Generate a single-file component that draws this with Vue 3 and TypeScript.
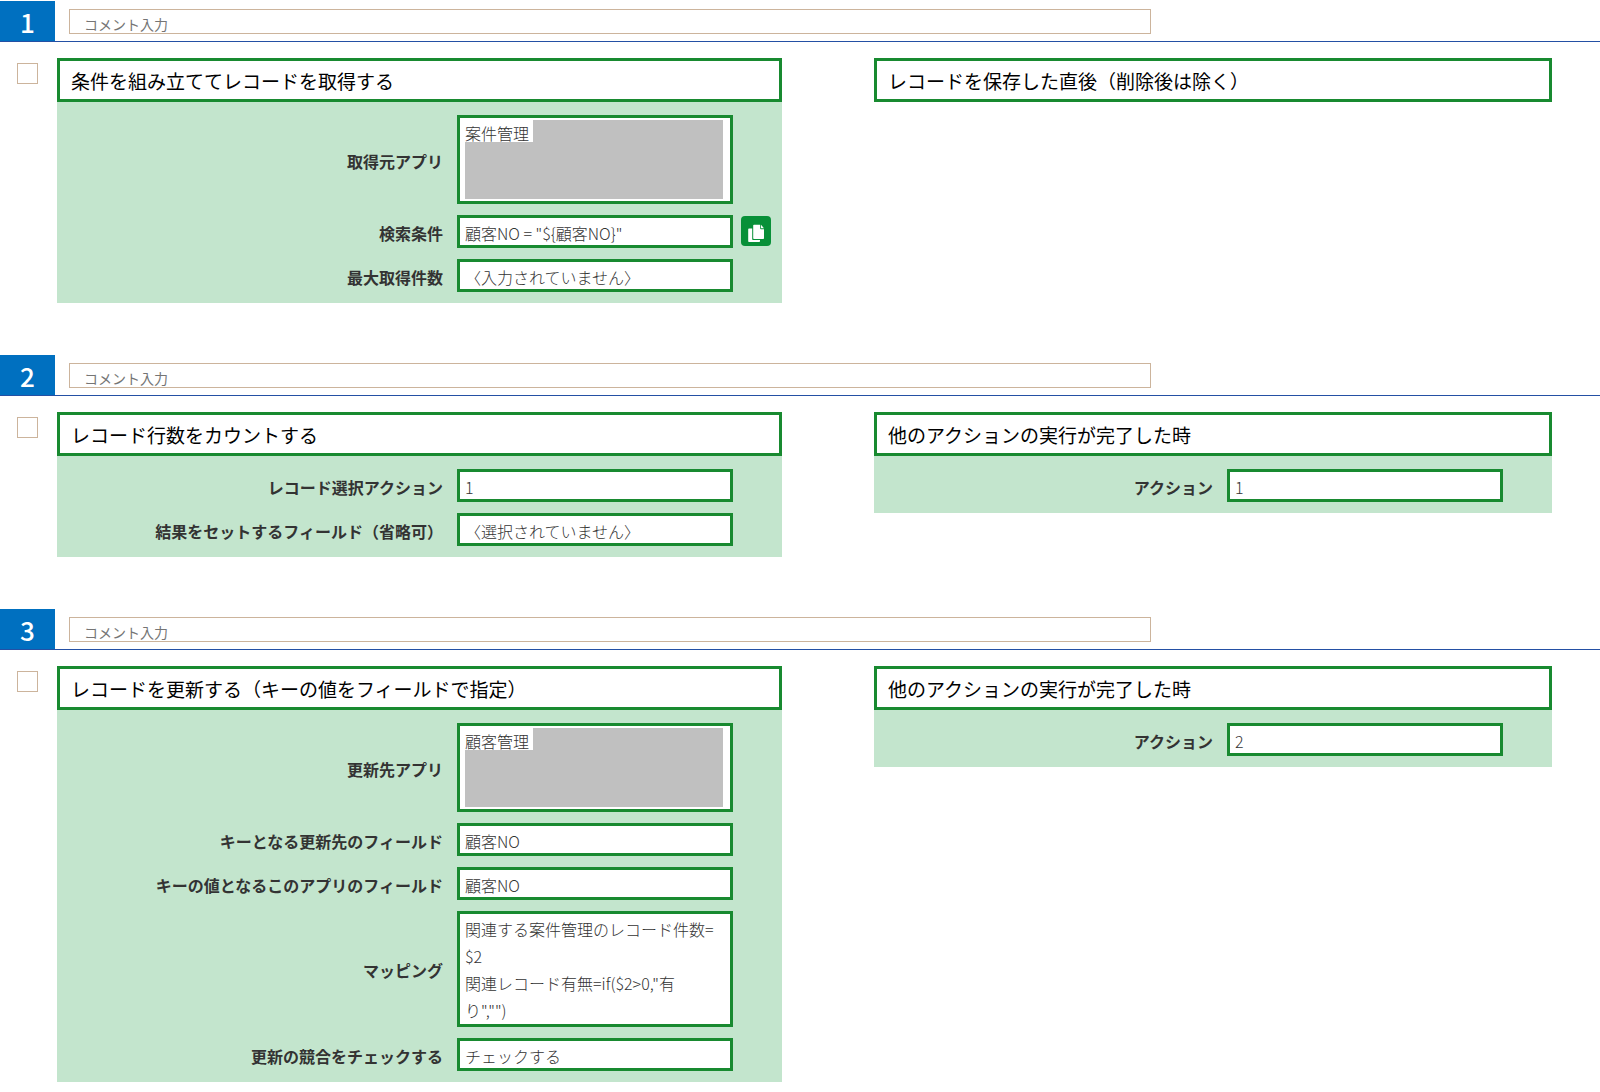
<script setup lang="ts">
interface Field {
  label: string
  value: string
  rows?: number
  masked?: boolean
  copyable?: boolean
}

interface Panel {
  title: string
  fields: Field[]
}

interface Step {
  no: number
  action: Panel
  trigger: Panel
}

const steps: Step[] = [
  {
    no: 1,
    action: {
      title: '条件を組み立ててレコードを取得する',
      fields: [
        { label: '取得元アプリ', value: '案件管理', rows: 3, masked: true },
        { label: '検索条件', value: '顧客NO = "${顧客NO}"', copyable: true },
        { label: '最大取得件数', value: '〈入力されていません〉' },
      ],
    },
    trigger: { title: 'レコードを保存した直後（削除後は除く）', fields: [] },
  },
  {
    no: 2,
    action: {
      title: 'レコード行数をカウントする',
      fields: [
        { label: 'レコード選択アクション', value: '1' },
        { label: '結果をセットするフィールド（省略可）', value: '〈選択されていません〉' },
      ],
    },
    trigger: {
      title: '他のアクションの実行が完了した時',
      fields: [{ label: 'アクション', value: '1' }],
    },
  },
  {
    no: 3,
    action: {
      title: 'レコードを更新する（キーの値をフィールドで指定）',
      fields: [
        { label: '更新先アプリ', value: '顧客管理', rows: 3, masked: true },
        { label: 'キーとなる更新先のフィールド', value: '顧客NO' },
        { label: 'キーの値となるこのアプリのフィールド', value: '顧客NO' },
        {
          label: 'マッピング',
          value: '関連する案件管理のレコード件数=\n$2\n関連レコード有無=if($2>0,"有\nり","")',
          rows: 4,
        },
        { label: '更新の競合をチェックする', value: 'チェックする' },
      ],
    },
    trigger: {
      title: '他のアクションの実行が完了した時',
      fields: [{ label: 'アクション', value: '2' }],
    },
  },
]

const panelsOf = (step: Step) => [
  { key: `action-${step.no}`, panel: step.action },
  { key: `trigger-${step.no}`, panel: step.trigger },
]
</script>

<template>
  <main class="steps">
    <section v-for="step in steps" :key="step.no" class="step">
      <header class="step-head">
        <span class="badge">{{ step.no }}</span>
        <input class="comment" type="text" placeholder="コメント入力" aria-label="コメント入力" />
      </header>
      <div class="step-body">
        <div class="pick">
          <input type="checkbox" :aria-label="`アクション${step.no}を選択`" />
        </div>
        <div v-for="{ key, panel } in panelsOf(step)" :key="key" class="panel">
          <button type="button" class="title">{{ panel.title }}</button>
          <div v-if="panel.fields.length" class="fields">
            <div v-for="(field, i) in panel.fields" :key="i" class="field">
              <label :for="`${key}-${i}`">{{ field.label }}</label>
              <div class="control">
                <textarea
                  v-if="field.rows"
                  :id="`${key}-${i}`"
                  class="value"
                  :rows="field.rows"
                  :value="field.value"
                  readonly
                ></textarea>
                <input
                  v-else
                  :id="`${key}-${i}`"
                  class="value"
                  type="text"
                  :value="field.value"
                  readonly
                />
                <span v-if="field.masked" class="mask"></span>
              </div>
              <div class="tool">
                <button v-if="field.copyable" type="button" class="copy" aria-label="コピー">
                  <svg viewBox="0 0 30 30" width="30" height="30" aria-hidden="true">
                    <path d="M8 12.5h3.2v10.7q0 .8.8.8h7v1.2q0 .8-.8.8H8q-.8 0-.8-.8V13.300q0-.8.8-.8z" fill="#fff" />
                    <path d="M13 8.800h6.200v3.700q0 .8.8.8h3v9q0 .8-.8.8H13q-.8 0-.8-.8V9.600q0-.8.8-.8z" fill="#fff" />
                    <path d="M20 8.800l3 3.500h-3z" fill="#fff" />
                  </svg>
                </button>
              </div>
            </div>
          </div>
        </div>
      </div>
    </section>
  </main>
</template>

<style>
body {
  margin: 0;
  background: #fff;
}
</style>

<style scoped>
.steps {
  padding-top: 1px;
  font-family: "Noto Sans CJK JP", "Noto Sans", sans-serif;
  color: #333;
}

.steps * {
  box-sizing: border-box;
}

input,
textarea,
button {
  margin: 0;
  font-family: inherit;
  border-radius: 0;
}

.step {
  margin-bottom: 52px;
}

.step:last-child {
  margin-bottom: 0;
}

.step-head {
  display: flex;
  align-items: stretch;
  gap: 14px;
  border-bottom: 1px solid #2450a4;
}

.badge {
  flex: none;
  width: 55px;
  height: 40px;
  line-height: 42px;
  text-align: center;
  font-size: 26px;
  font-weight: 500;
  color: #fff;
  background: #0070c0;
}

.comment {
  width: calc(70% - 38px);
  min-width: 0;
  height: 25px;
  margin-top: 8px;
  padding: 4px 14px 0;
  border: 1px solid #ccb49c;
  background: #fff;
  font-size: 14px;
  line-height: 20px;
  outline: none;
}

.comment::placeholder {
  color: #757575;
  opacity: 1;
}

.step-body {
  display: grid;
  grid-template-columns: 57px 725fr 92px 678fr;
  align-items: start;
  padding: 16px 48px 0 0;
}

.panel + .panel {
  grid-column: 4;
}

.pick {
  padding: 5px 0 0 17px;
}

.pick input {
  display: block;
  appearance: none;
  width: 21px;
  height: 21px;
  border: 1px solid #ccb49c;
  background: #fff;
}

.title {
  display: block;
  width: 100%;
  height: 44px;
  padding: 0 11px;
  border: 3px solid #188a30;
  background: #fff;
  color: #000;
  font-size: 19px;
  text-align: left;
}

.fields {
  display: flex;
  flex-direction: column;
  gap: 11px;
  padding: 13px 0 11px;
  background: #c3e5cd;
}

.field {
  display: flex;
  align-items: center;
}

.field label {
  flex: 1;
  padding: 2px 14px 0 0;
  text-align: right;
  font-size: 16px;
  line-height: 24px;
  font-weight: 700;
}

.control {
  position: relative;
  width: 276px;
}

.value {
  display: block;
  width: 100%;
  padding: 2px 5px 0;
  border: 3px solid #188a30;
  background: #fff;
  color: #333;
  font-size: 16px;
  font-weight: 300;
  line-height: 27px;
  resize: none;
  overflow: hidden;
  outline: none;
}

input.value {
  height: 33px;
}

.mask {
  position: absolute;
  inset: 5px 10px 5px 8px;
  background: #c0c0c0;
  clip-path: polygon(68px 0, 100% 0, 100% 100%, 0 100%, 0 22px, 68px 22px);
}

.tool {
  width: 49px;
  height: 31px;
  padding-left: 8px;
}

.copy {
  display: block;
  width: 30px;
  height: 30px;
  padding: 0;
  border: 0;
  border-radius: 4px;
  background: #089038;
}

.copy svg {
  display: block;
}
</style>
